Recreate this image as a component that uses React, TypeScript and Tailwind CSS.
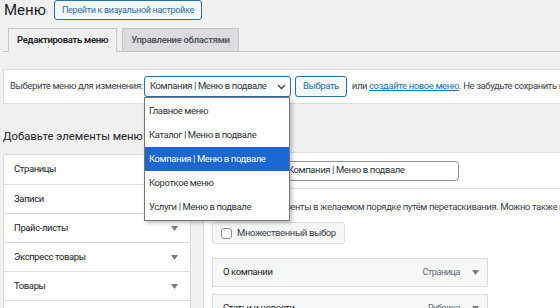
import React from 'react';

const Arrow = ({ className = '' }: { className?: string }) => (
  <svg width="7" height="5" viewBox="0 0 7 5" className={className}>
    <path d="M0 0h7L3.5 5z" fill="#787c82" />
  </svg>
);

const sections = ['Страницы', 'Записи', 'Прайс-листы', 'Экспресс товары', 'Товары', 'Рубрики'];

const menus = [
  'Главное меню',
  'Каталог | Меню в подвале',
  'Компания | Меню в подвале',
  'Короткое меню',
  'Услуги | Меню в подвале',
];

const items = [
  { title: 'О компании', type: 'Страница' },
  { title: 'Статьи и новости', type: 'Рубрика' },
];

const App = () => {
  return (
    <div className="w-[560px] h-[308px] overflow-hidden bg-[#f0f0f1] font-['Roboto',sans-serif] text-[9.5px] tracking-[-0.4px] text-[#3c434a]">
      <div className="w-[720px] pl-[3px]">
        {/* Header */}
        <div className="flex items-center h-[20px] gap-[8px] pl-[1px]">
          <h1 className="text-[15px] tracking-normal leading-none text-[#1d2327]">Меню</h1>
          <button className="h-[20px] px-[7px] text-[9px] tracking-[-0.3px] leading-none text-[#2271b1] bg-[#f6f7f7] border border-[#2271b1] rounded-[3px]">
            Перейти к визуальной настройке
          </button>
        </div>

        {/* Tabs */}
        <div className="mt-[8px] flex gap-[5px] pl-[5px] border-b border-[#c3c4c7]">
          <div className="h-[24px] px-[8px] flex items-center text-[9.5px] tracking-[-0.3px] font-semibold text-[#1d2327] bg-[#f0f0f1] border border-[#c3c4c7] border-b-[#f0f0f1] -mb-px">
            Редактировать меню
          </div>
          <div className="h-[23px] px-[8px] flex items-center text-[9.5px] tracking-[-0.3px] font-semibold text-[#50575e] bg-[#dcdcde] border border-b-0 border-[#c3c4c7]">
            Управление областями
          </div>
        </div>

        {/* Select menu bar */}
        <div className="mt-[17px] h-[35px] bg-white border border-[#dcdcde] flex items-center px-[6px] whitespace-nowrap">
          <span className="w-[134px]">Выберите меню для изменения:</span>
          <div className="relative">
            <div className="w-[147px] h-[21px] border border-[#2271b1] rounded-[3px] flex items-center justify-between pl-[5px] pr-[4px] text-[#2c3338]">
              <span>Компания | Меню в подвале</span>
              <svg width="9" height="6" viewBox="0 0 9 6">
                <path d="M1 1l3.5 3.5L8 1" stroke="#3c434a" strokeWidth="1.3" fill="none" />
              </svg>
            </div>
            <div className="absolute left-0 top-[21px] z-10 w-[146px] bg-white border border-[#767676] shadow-[2px_2px_4px_rgba(0,0,0,0.25)] py-[1px]">
              {menus.map((m) => (
                <div
                  key={m}
                  className={
                    m === 'Компания | Меню в подвале'
                      ? 'h-[24px] flex items-center pl-[4px] bg-[#1a66d2] text-white'
                      : 'h-[24px] flex items-center pl-[4px] text-[#2c3338]'
                  }
                >
                  {m}
                </div>
              ))}
            </div>
          </div>
          <button className="ml-[4px] h-[21px] px-[7px] text-[#2271b1] bg-[#f6f7f7] border border-[#2271b1] rounded-[3px]">
            Выбрать
          </button>
          <span className="ml-[5px]">
            или <span className="text-[#2271b1] underline">создайте новое меню</span>. Не забудьте сохранить изменения!
          </span>
        </div>

        {/* Columns */}
        <div className="mt-[26px] flex gap-[12px]">
          <div className="w-[188px] shrink-0">
            <h2 className="text-[11.3px] tracking-normal leading-none text-[#1d2327] h-[24px] pt-[1px]">Добавьте элементы меню</h2>
            <div className="border border-[#dcdcde] bg-white">
              {sections.map((s, i) => (
                <div
                  key={s}
                  className={
                    i === 0
                      ? 'h-[29px] flex items-center justify-between pl-[10px] pr-[12px] text-[#1d2327]'
                      : 'h-[29px] flex items-center justify-between pl-[10px] pr-[12px] text-[#1d2327] border-t border-[#dcdcde]'
                  }
                >
                  <span>{s}</span>
                  <Arrow />
                </div>
              ))}
            </div>
          </div>

          <div className="mt-[22px] flex-1 bg-white border border-[#dcdcde]">
            <div className="h-[36px] flex items-center px-[8px] border-b border-[#dcdcde]">
              <span className="w-[70px] text-[#1d2327]">Название меню</span>
              <div className="w-[177px] h-[20px] border border-[#8c8f94] rounded-[4px] flex items-center px-[5px] text-[#2c3338]">
                Компания | Меню в подвале
              </div>
            </div>
            <div className="px-[8px] pt-[11px]">
              <p className="whitespace-nowrap leading-[14px]">
                Расположите элементы в желаемом порядке путём перетаскивания. Можно также щёлкнуть на стрелку справа от элемента.
              </p>
              <div className="mt-[8px] inline-flex items-center h-[22px] px-[8px] gap-[5px] bg-[#f6f7f7] border border-[#dcdcde] rounded-[3px]">
                <span className="w-[11px] h-[11px] border border-[#8c8f94] rounded-[3px] bg-white" />
                <span>Множественный выбор</span>
              </div>
              <div className="mt-[14px] flex flex-col gap-[7px]">
                {items.map((it) => (
                  <div
                    key={it.title}
                    className="w-[276px] h-[29px] flex items-center justify-between pl-[10px] pr-[8px] bg-[#f6f7f7] border border-[#dcdcde]"
                  >
                    <span className="text-[#1d2327]">{it.title}</span>
                    <span className="flex items-center gap-[12px] text-[#646970] text-[9px]">
                      {it.type}
                      <Arrow />
                    </span>
                  </div>
                ))}
              </div>
            </div>
          </div>
        </div>
      </div>
    </div>
  );
};

export default App;
